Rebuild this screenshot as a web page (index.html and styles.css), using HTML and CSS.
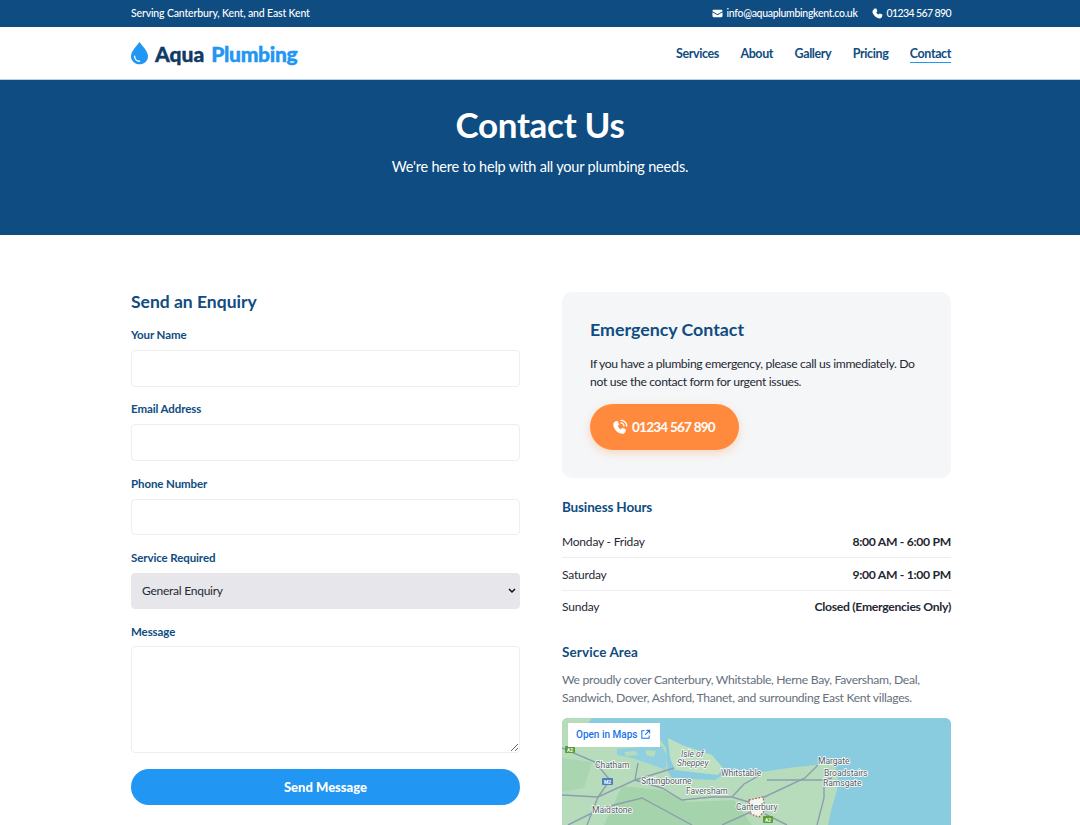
FILE: index.html
```html
<!DOCTYPE html>
<html lang="en">
<head>
  <meta charset="UTF-8" />
  <title>Aqua Plumbing | Contact</title>
  <link rel="stylesheet" href="styles.css">
</head>
<body>

  <!-- Top bar -->
  <div class="topbar">
    <div class="wrap topbar-inner">
      <span class="top-text">Serving Canterbury, Kent, and East Kent</span>
      <div class="topbar-links">
        <a href="#">
          <svg class="top-icon" viewBox="0 0 24 24"><path d="M1 6.500A2.500 2.500 0 0 1 3.500 4h17A2.500 2.500 0 0 1 23 6.500v.4l-11 6.600L1 6.900z"/><path d="M1 9.300V17.500A2.500 2.500 0 0 0 3.500 20h17a2.500 2.500 0 0 0 2.500-2.500V9.300l-11 6.600z"/></svg>
          <span class="top-mail">info@aquaplumbingkent.co.uk</span>
        </a>
        <a href="#">
          <svg class="top-icon" viewBox="0 0 24 24"><path d="M6.600 1.300 9.500 1l2.400 6-2.600 2.400c.9 2.100 2.800 4 5 5l2.400-2.600 6 2.400-.3 2.900c-.2 2.300-2.300 5.700-5 5.600C9.200 22.500 1.500 14.800 1 8.300.9 5.600 4.300 1.500 6.600 1.300z"/></svg>
          <span class="top-phone">01234 567 890</span>
        </a>
      </div>
    </div>
  </div>

  <!-- Header -->
  <header>
    <div class="wrap header-inner">
      <a class="logo" href="#">
        <svg class="logo-drop" viewBox="0 0 18 24">
          <path d="M9 0C7 4 0 9.500 0 15.500 0 20.500 4 24 9 24s9-3.500 9-8.500C18 9.500 11 4 9 0z" fill="#2196f3"/>
          <path d="M3.800 15.500c0 2.900 2.300 5.200 5.200 5.200" fill="none" stroke="#fff" stroke-width="1.500" stroke-linecap="round"/>
        </svg>
        <span class="logo-dark">Aqua</span>
        <span class="logo-light">Plumbing</span>
      </a>
      <nav>
        <a href="#">Services</a>
        <a href="#">About</a>
        <a href="#">Gallery</a>
        <a href="#">Pricing</a>
        <a href="#" class="active">Contact</a>
      </nav>
    </div>
  </header>

  <!-- Hero -->
  <section class="hero">
    <h1>Contact Us</h1>
    <p>We're here to help with all your plumbing needs.</p>
  </section>

  <!-- Main -->
  <main class="wrap contact-grid">

    <!-- Left: form -->
    <form class="enquiry">
      <h2>Send an Enquiry</h2>
      <div class="field">
        <label for="name">Your Name</label>
        <input id="name" type="text">
      </div>
      <div class="field">
        <label for="email">Email Address</label>
        <input id="email" type="email">
      </div>
      <div class="field">
        <label for="phone">Phone Number</label>
        <input id="phone" type="tel">
      </div>
      <div class="field">
        <label for="service">Service Required</label>
        <select id="service">
          <option>General Enquiry</option>
        </select>
      </div>
      <div class="field field-last">
        <label for="message">Message</label>
        <textarea id="message"></textarea>
      </div>
      <button class="send-btn" type="button">Send Message</button>
    </form>

    <!-- Right: info -->
    <div class="info">
      <div class="emergency">
        <h2>Emergency Contact</h2>
        <p>If you have a plumbing emergency, please call us immediately. Do not use the contact form for urgent issues.</p>
        <a class="call-btn" href="#">
          <svg class="call-icon" viewBox="0 0 24 24">
            <path d="M5.500 3.500 8.500 3l2.300 5.300-2.300 2.100c1 2.100 2.700 3.900 4.900 4.900l2.100-2.300 5.300 2.300-.5 3c-.3 2-2.300 4-4.700 3.900C8.800 21.800 2.500 15.500 2 9c-.1-2.500 1.500-5.100 3.500-5.500z"/>
            <path d="M13.500 2a8.500 8.500 0 0 1 8.500 8.500M13.500 6a4.500 4.500 0 0 1 4.500 4.500" fill="none" stroke="#fff" stroke-width="2" stroke-linecap="round"/>
          </svg>
          <span>01234 567 890</span>
        </a>
      </div>

      <h3>Business Hours</h3>
      <div class="hours">
        <div class="hours-row"><span>Monday - Friday</span><strong>8:00 AM - 6:00 PM</strong></div>
        <div class="hours-row"><span>Saturday</span><strong>9:00 AM - 1:00 PM</strong></div>
        <div class="hours-row"><span>Sunday</span><strong>Closed (Emergencies Only)</strong></div>
      </div>

      <h3 class="area-title">Service Area</h3>
      <p class="area-text">We proudly cover Canterbury, Whitstable, Herne Bay, Faversham, Deal, Sandwich, Dover, Ashford, Thanet, and surrounding East Kent villages.</p>

      <div class="map">
        <svg class="map-art" viewBox="0 0 389 107">
          <rect width="389" height="107" fill="#8accdf"/>
          <!-- mainland -->
          <path d="M0 0 L30 0 L26 5 L97 20 L104 30 L106 54 L110 60 L153 62 L160 57 L200 54 L226 50 L253 47 L270 45 L276 54 L275 72 L270 89 L266 107 L0 107Z" fill="#b7dcbb"/>
          <!-- medway and swale -->
          <path d="M55 31 L80 29 L100 28 L105 38 L104 52 L85 45 L70 40 L55 37Z" fill="#8fcfe0"/>
          <path d="M62 34 L74 33 L76 37 L64 38Z" fill="#b7dcbb"/>
          <path d="M84 32 L94 33 L92 39 L84 37Z" fill="#b7dcbb"/>
          <!-- sheppey -->
          <path d="M106 20 L120 27 L150 37 L161 50 L156 57 L113 52 L108 40Z" fill="#bde0c0"/>
          <!-- darker green -->
          <path d="M42 107 L60 68 L100 72 L125 84 L172 82 L190 107Z" fill="#a5d4ac"/>
          <path d="M0 40 L30 44 L22 70 L0 74Z" fill="#a9d6b0"/>
          <!-- roads -->
          <g fill="none" stroke="#8d9dae" stroke-width="1.400">
            <path d="M0 77 L36 79 L73 62 L100 70 L120 82 L150 79 L170 79 L190 85"/>
            <path d="M0 30 L33 44 L48 62 L36 79 L25 107"/>
            <path d="M196 82 L243 60 L256 47"/>
            <path d="M205 62 L262 62 L270 60"/>
            <path d="M193 92 L160 107"/>
            <path d="M203 96 L225 107"/>
            <path d="M262 62 L262 80 L255 107"/>
            <path d="M6 107 L40 90 L80 80 L130 107"/>
            <path d="M76 45 L73 62"/>
            <path d="M73 62 L112 50"/>
            <path d="M170 79 L182 66 L200 56"/>
          </g>
          <!-- canterbury outline -->
          <path d="M187 82 L201 79 L203 92 L197 99 L189 96Z" fill="#f1f7ef" stroke="#b5524a" stroke-width="1.100" stroke-dasharray="1.800 1.400"/>
          <!-- road badges -->
          <rect x="201" y="98" width="10" height="7" rx="1" fill="#5c9b35"/>
          <rect x="3" y="28" width="10" height="7" rx="1" fill="#5c9b35"/>
          <rect x="40" y="60" width="11" height="7" rx="1" fill="#4a7fc0"/>
          <g class="map-badge">
            <text x="206" y="103.500">A2</text>
            <text x="8" y="33.500">A2</text>
            <text x="45.500" y="65.500">M2</text>
          </g>
          <!-- labels -->
          <g class="map-label">
            <text x="33" y="50">Chatham</text>
            <text x="79" y="66">Sittingbourne</text>
            <text x="124" y="76">Faversham</text>
            <text x="30" y="95">Maidstone</text>
            <text x="159" y="58">Whitstable</text>
            <text x="174" y="92">Canterbury</text>
            <text x="256" y="46">Margate</text>
            <text x="262" y="58">Broadstairs</text>
            <text x="261" y="68">Ramsgate</text>
            <text class="map-italic" x="119" y="39">Isle of</text>
            <text class="map-italic" x="115" y="48">Sheppey</text>
          </g>
        </svg>
        <a class="map-link" href="#">
          Open in Maps
          <svg class="map-link-icon" viewBox="0 0 24 24"><path d="M10 4H4v16h16v-6M14 3h7v7M21 3l-10 10" fill="none" stroke="#1a73e8" stroke-width="2.200"/></svg>
        </a>
      </div>
    </div>

  </main>

</body>
</html>
```

FILE: styles.css
```css
* {
  box-sizing: border-box;
  margin: 0;
  padding: 0;
}

body {
  background: #fff;
  color: #1f2933;
  font-family: 'Lato', sans-serif;
  overflow: hidden;
}

a {
  color: inherit;
  text-decoration: none;
}

.wrap {
  width: 820px;
  margin: 0 129px 0 131px;
}

/* Top bar */
.topbar {
  height: 27px;
  background: #0f4c81;
  color: #fff;
  font-size: 10.500px;
  font-weight: 500;
}

.topbar-inner {
  height: 26px;
  display: flex;
  justify-content: space-between;
  align-items: center;
}

.top-text {
  letter-spacing: -0.15px;
}

.top-mail {
  letter-spacing: -0.3px;
}

.top-phone {
  letter-spacing: -0.6px;
}

.topbar-links {
  display: flex;
  gap: 14px;
}

.topbar-links a {
  display: flex;
  align-items: center;
  gap: 4px;
}

.top-icon {
  width: 11px;
  height: 11px;
  fill: #fff;
}

/* Header */
header {
  height: 53px;
  background: #fff;
  border-bottom: 1px solid #b9d0e4;
}

.header-inner {
  height: 52px;
  display: flex;
  justify-content: space-between;
  align-items: center;
}

.logo {
  display: flex;
  align-items: center;
  font-size: 21px;
  font-weight: 900;
  -webkit-text-stroke: 0.4px;
}

.logo-drop {
  width: 17px;
  height: 24px;
  margin-right: 7px;
}

.logo-dark {
  color: #0f3b66;
  margin-right: 7px;
}

.logo-light {
  color: #2196f3;
  letter-spacing: -0.3px;
}

nav {
  display: flex;
  gap: 21.500px;
  color: #0f4c81;
  font-size: 12.500px;
  font-weight: 700;
  letter-spacing: -0.4px;
}

nav a {
  padding: 3px 0 1px;
}

nav a.active {
  border-bottom: 1.500px solid #2196f3;
}

/* Hero */
.hero {
  height: 155px;
  padding-top: 21px;
  background: #0f4c81;
  color: #fff;
  text-align: center;
}

.hero h1 {
  font-size: 35px;
  font-weight: 700;
  line-height: 46px;
  letter-spacing: -0.3px;
}

.hero p {
  margin-top: 9px;
  font-size: 14.500px;
  line-height: 22px;
  letter-spacing: -0.2px;
}

/* Main layout */
.contact-grid {
  display: grid;
  grid-template-columns: 389px 389px;
  gap: 42px;
  padding-top: 57px;
}

/* Form */
.enquiry h2 {
  color: #0f4c81;
  font-size: 17.500px;
  font-weight: 700;
  line-height: 20px;
  margin-bottom: 15px;
}

.field {
  margin-bottom: 14.800px;
}

.field-last {
  margin-bottom: 16px;
}

.field label {
  display: block;
  color: #0f4c81;
  font-size: 11.500px;
  font-weight: 700;
  line-height: 15px;
  letter-spacing: -0.1px;
  margin-bottom: 8px;
}

.field-last label {
  margin-bottom: 7px;
}

.field input,
.field select,
.field textarea {
  display: block;
  width: 100%;
  height: 36.500px;
  border: 1px solid #eceef0;
  border-radius: 4px;
  background: #fff;
  font-family: 'Lato', sans-serif;
  font-size: 13px;
}

.field select {
  appearance: none;
  padding: 0 10px 2px;
  border-color: #e7e7eb;
  background: #e7e7eb url("data:image/svg+xml,%3Csvg xmlns='http://www.w3.org/2000/svg' width='8' height='6'%3E%3Cpath d='M1 1l3 3 3-3' fill='none' stroke='%23111' stroke-width='1.500'/%3E%3C/svg%3E") no-repeat right 3px center;
  color: #1f2933;
  font-size: 12px;
  letter-spacing: -0.25px;
}

.field textarea {
  height: 107px;
}

.send-btn {
  display: block;
  width: 100%;
  height: 36px;
  border: none;
  border-radius: 18px;
  background: #2196f3;
  color: #fff;
  font-family: 'Lato', sans-serif;
  font-size: 13px;
  font-weight: 900;
  cursor: pointer;
}

/* Emergency card */
.emergency {
  height: 186px;
  padding: 27px 28px;
  background: #f5f6f8;
  border-radius: 10px;
}

.emergency h2 {
  color: #0f4c81;
  font-size: 17.800px;
  font-weight: 700;
  line-height: 20px;
  margin-bottom: 16px;
}

.emergency p {
  font-size: 12.200px;
  line-height: 18px;
  letter-spacing: -0.35px;
  margin-bottom: 13px;
}

.call-btn {
  display: inline-flex;
  align-items: center;
  gap: 4px;
  height: 46px;
  padding: 0 24px 0 22px;
  border-radius: 23px;
  background: #ff8a3d;
  color: #fff;
  font-size: 13.500px;
  font-weight: 700;
  letter-spacing: -0.75px;
  box-shadow: 0 3px 8px rgba(255, 138, 61, 0.3);
}

.call-icon {
  width: 16px;
  height: 16px;
  fill: #fff;
}

/* Hours */
.info h3 {
  color: #0f4c81;
  font-size: 13.500px;
  font-weight: 700;
  line-height: 18px;
  letter-spacing: -0.15px;
  margin-top: 20px;
  margin-bottom: 10px;
}

.hours-row {
  display: flex;
  justify-content: space-between;
  align-items: center;
  height: 32.400px;
  font-size: 12px;
  letter-spacing: -0.2px;
  border-bottom: 1px solid #eceef0;
}

.hours-row:last-child {
  border-bottom: none;
}

.hours-row strong {
  font-size: 12.200px;
  font-weight: 700;
  letter-spacing: -0.3px;
}

.info .area-title {
  margin-top: 20px;
  margin-bottom: 10px;
  letter-spacing: 0.1px;
}

.area-text {
  color: #66707c;
  font-size: 12.200px;
  line-height: 18px;
  letter-spacing: -0.32px;
  margin-bottom: 10.500px;
}

/* Map */
.map {
  position: relative;
  height: 107px;
  border-radius: 6px 6px 0 0;
  overflow: hidden;
  background: #b7dcbb;
}

.map-art {
  display: block;
  width: 389px;
  height: 107px;
}

.map-label text {
  font-family: 'Roboto', sans-serif;
  font-size: 8.500px;
  fill: #4f5a64;
  stroke: #fff;
  stroke-width: 1.500px;
  paint-order: stroke;
}

.map-label .map-italic {
  font-style: italic;
}

.map-badge text {
  font-family: 'Roboto', sans-serif;
  font-size: 5px;
  font-weight: 700;
  fill: #fff;
  text-anchor: middle;
}

.map-link {
  position: absolute;
  top: 5px;
  left: 6px;
  display: flex;
  align-items: center;
  gap: 3px;
  height: 24px;
  padding: 0 9px 0 8px;
  background: #fff;
  color: #1a73e8;
  font-family: 'Roboto', sans-serif;
  font-size: 10px;
  font-weight: 500;
}

.map-link-icon {
  width: 11px;
  height: 11px;
}
```
